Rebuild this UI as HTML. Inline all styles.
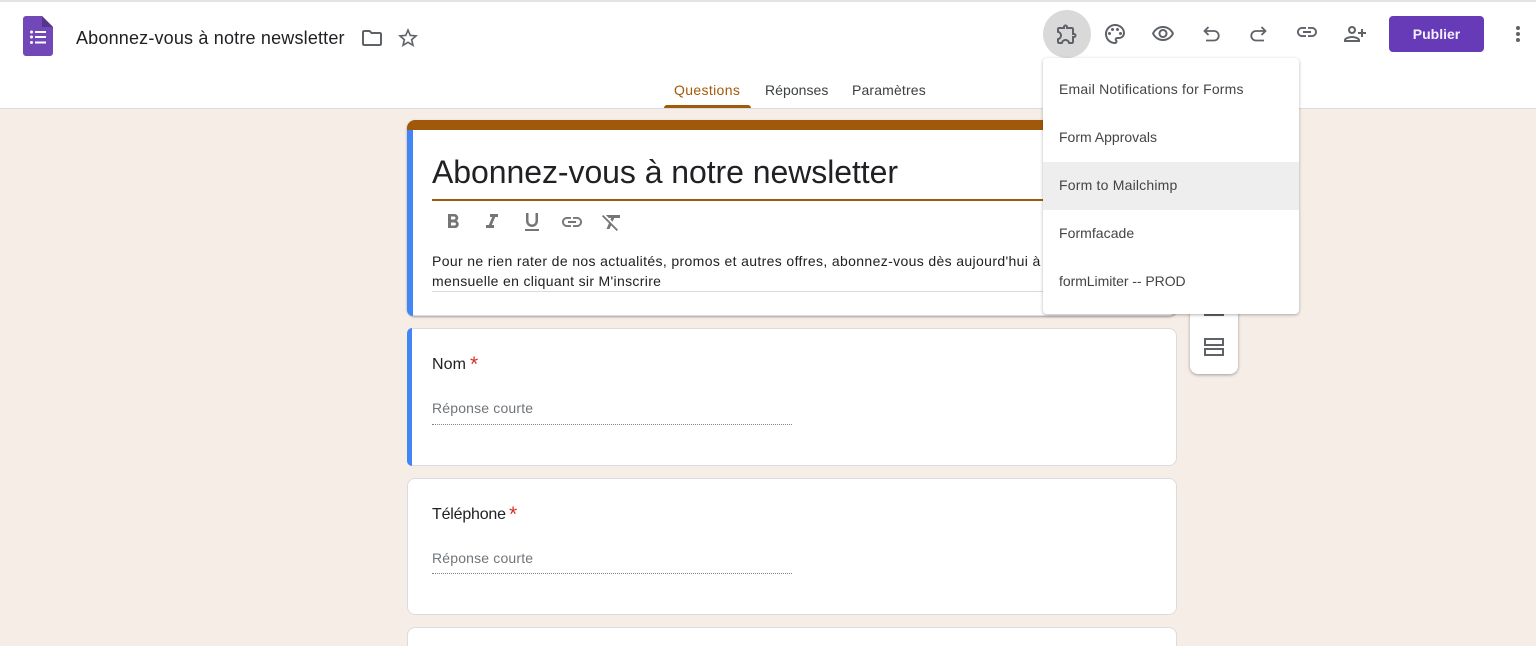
<!DOCTYPE html>
<html lang="fr"><head><meta charset="utf-8"><title>Abonnez-vous à notre newsletter</title>
<style>
html,body{margin:0;padding:0;width:1536px;height:646px;overflow:hidden}
body{background:#f6ede7;position:relative;font-family:"Liberation Sans",sans-serif}
#w{position:absolute;left:0;top:0;width:1536px;height:646px;overflow:hidden}
.a{position:absolute;white-space:nowrap}
svg.i{position:absolute;fill:#5f6368}
svg.g{position:absolute;fill:#757575}
.card{position:absolute;left:407px;width:768px;background:#fff;border:1px solid #dadce0;border-radius:8px}
.blue{position:absolute;left:-1px;top:-1px;bottom:-1px;width:5px;background:#4285f4;border-radius:8px 0 0 8px}
.m{position:absolute;left:0;width:256px;height:48px;line-height:48px;text-indent:16px;font-size:14px;color:#444;white-space:nowrap;letter-spacing:.2px}
.s{position:absolute;font-size:21px;line-height:20px;color:#d93025}
</style></head><body><div id="w">

<div class="a" style="left:0;top:0;width:1536px;height:108px;background:#fff;border-bottom:1px solid #dadce0"></div>
<div class="a" style="left:0;top:0;width:1536px;height:2px;background:#e3e3e3"></div>

<svg style="position:absolute;left:23px;top:16px" width="30" height="40" viewBox="0 0 30 40">
<path d="M3 0H19L30 11V37a3 3 0 0 1-3 3H3a3 3 0 0 1-3-3V3a3 3 0 0 1 3-3z" fill="#7248b9"/>
<path d="M19 0L30 11H19z" fill="#55368f"/>
<g fill="#fff"><circle cx="8.500" cy="16" r="1.500"/><circle cx="8.500" cy="21" r="1.500"/><circle cx="8.500" cy="26.500" r="1.500"/><rect x="12" y="15" width="11" height="2"/><rect x="12" y="20" width="11" height="2"/><rect x="12" y="25.500" width="11" height="2"/></g>
</svg>
<div class="a" style="left:76px;top:27px;font-size:18px;line-height:22px;color:#202124;letter-spacing:.18px">Abonnez-vous à notre newsletter</div>
<svg class="i" style="left:360px;top:26px" width="24" height="24" viewBox="0 0 24 24"><path d="M9.170 6l2 2H20v10H4V6h5.170M10 4H4c-1.100 0-1.990.9-1.990 2L2 18c0 1.100.9 2 2 2h16c1.100 0 2-.9 2-2V8c0-1.100-.9-2-2-2h-8l-2-2z"/></svg>
<svg class="i" style="left:396px;top:26px" width="24" height="24" viewBox="0 0 24 24"><path d="M22 9.240l-7.190-.62L12 2 9.190 8.630 2 9.240l5.460 4.730L5.820 21 12 17.270 18.180 21l-1.630-7.030L22 9.240zM12 15.400l-3.760 2.270 1-4.280-3.320-2.880 4.380-.38L12 6.100l1.710 4.040 4.380.38-3.320 2.880 1 4.280L12 15.400z"/></svg>

<div class="a" style="left:1043px;top:10px;width:48px;height:48px;border-radius:50%;background:#d9d9d9"></div>
<svg class="i" style="left:1055px;top:22px" width="24" height="24" viewBox="0 0 24 24"><path d="M10.500 4.500c.28 0 .5.22.5.5v2h6v6h2c.28 0 .5.22.5.5s-.22.5-.5.5h-2v6h-2.120c-.68-1.750-2.390-3-4.380-3s-3.700 1.250-4.380 3H4v-2.120c1.750-.68 3-2.390 3-4.380 0-1.990-1.240-3.700-2.990-4.380L4 7h6V5c0-.28.22-.5.5-.5zm0-2C9.120 2.500 8 3.620 8 5H4c-1.100 0-1.990.9-1.990 2v3.800h.29c1.490 0 2.700 1.210 2.700 2.700s-1.210 2.700-2.700 2.700H2V20c0 1.100.9 2 2 2h3.800v-.3c0-1.490 1.210-2.700 2.700-2.700s2.700 1.210 2.700 2.700v.3H17c1.100 0 2-.9 2-2v-4c1.380 0 2.500-1.120 2.500-2.500S20.380 11 19 11V7c0-1.100-.9-2-2-2h-4c0-1.380-1.120-2.500-2.500-2.500z"/></svg>
<svg class="i" style="left:1103px;top:22px" width="24" height="24" viewBox="0 0 24 24"><path d="M12 2C6.490 2 2 6.490 2 12s4.490 10 10 10c1.380 0 2.500-1.120 2.500-2.500 0-.61-.23-1.200-.64-1.670-.08-.1-.13-.21-.13-.33 0-.28.22-.5.5-.5H16c3.310 0 6-2.690 6-6 0-4.960-4.490-9-10-9zm4 13h-1.770c-1.380 0-2.500 1.120-2.500 2.500 0 .6.22 1.180.62 1.640.07.08.15.24.15.36 0 .28-.22.5-.5.5-4.410 0-8-3.590-8-8s3.590-8 8-8 8 3.140 8 7c0 2.210-1.790 4-4 4z"/><circle cx="6.500" cy="11.500" r="1.500"/><circle cx="9.500" cy="7.500" r="1.500"/><circle cx="14.500" cy="7.500" r="1.500"/><circle cx="17.500" cy="11.500" r="1.500"/></svg>
<svg class="i" style="left:1151px;top:22px" width="24" height="24" viewBox="0 0 24 24"><path d="M12 6c3.790 0 7.170 2.130 8.820 5.500C19.170 14.870 15.790 17 12 17s-7.170-2.130-8.820-5.500C4.830 8.130 8.210 6 12 6m0-2C7 4 2.730 7.110 1 11.500 2.730 15.890 7 19 12 19s9.270-3.110 11-7.500C21.270 7.110 17 4 12 4zm0 5c1.380 0 2.500 1.120 2.500 2.500S13.380 14 12 14s-2.500-1.120-2.500-2.500S10.620 9 12 9m0-2c-2.480 0-4.500 2.020-4.500 4.500S9.520 16 12 16s4.500-2.020 4.500-4.500S14.480 7 12 7z"/></svg>
<svg style="position:absolute;left:1199px;top:22px" width="24" height="24" viewBox="0 0 24 24" fill="none" stroke="#5f6368" stroke-width="1.800"><path d="M9.500 5L5.500 9l4 4M5.500 9H15a4.500 4.500 0 0 1 0 9.500H7"/></svg>
<svg style="position:absolute;left:1247px;top:22px" width="24" height="24" viewBox="0 0 24 24" fill="none" stroke="#5f6368" stroke-width="1.800"><path d="M14.500 5l4 4-4 4M18.500 9H9a4.500 4.500 0 0 0 0 9.500h8"/></svg>
<svg class="i" style="left:1295px;top:20px" width="24" height="24" viewBox="0 0 24 24"><path d="M3.900 12c0-1.710 1.390-3.100 3.100-3.100h4V7H7c-2.760 0-5 2.240-5 5s2.240 5 5 5h4v-1.900H7c-1.710 0-3.100-1.390-3.100-3.100zM8 13h8v-2H8v2zm9-6h-4v1.900h4c1.710 0 3.100 1.390 3.100 3.100s-1.390 3.100-3.100 3.100h-4V17h4c2.760 0 5-2.240 5-5s-2.240-5-5-5z"/></svg>
<svg class="i" style="left:1343px;top:22px;transform:scaleX(-1)" width="24" height="24" viewBox="0 0 24 24"><path d="M15 12c2.210 0 4-1.790 4-4s-1.790-4-4-4-4 1.790-4 4 1.790 4 4 4zm0-6c1.100 0 2 .9 2 2s-.9 2-2 2-2-.9-2-2 .9-2 2-2zm0 8c-2.670 0-8 1.340-8 4v2h16v-2c0-2.660-5.330-4-8-4zm-6 4c.22-.72 3.310-2 6-2 2.700 0 5.800 1.290 6 2H9zm-3-3v-3h3v-2H6V7H4v3H1v2h3v3h2z"/></svg>
<div class="a" style="left:1389px;top:16px;width:95px;height:36px;line-height:36px;border-radius:4px;background:#673ab7;color:#f3eefb;text-align:center;font-size:14px;font-weight:700">Publier</div>
<svg class="i" style="left:1506px;top:22px" width="24" height="24" viewBox="0 0 24 24"><circle cx="12" cy="6" r="2"/><circle cx="12" cy="12" r="2"/><circle cx="12" cy="18" r="2"/></svg>

<div class="a" style="left:674px;top:82px;font-size:14px;line-height:16px;color:#a25a0b;letter-spacing:.35px">Questions</div>
<div class="a" style="left:765px;top:82px;font-size:14px;line-height:16px;color:#3c4043;letter-spacing:.05px">Réponses</div>
<div class="a" style="left:852px;top:82px;font-size:14px;line-height:16px;color:#3c4043;letter-spacing:.15px">Paramètres</div>
<div class="a" style="left:664px;top:105px;width:87px;height:3px;background:#a0590a;border-radius:3px 3px 0 0"></div>

<div class="card" style="top:120px;height:195px;border-top:0;box-shadow:0 1px 2px rgba(0,0,0,.35)">
  <div class="a" style="left:-1px;top:0;width:770px;height:10px;background:#a0590a;border-radius:8px 8px 0 0"></div>
  <div class="a" style="left:-1px;top:10px;width:6px;height:186px;background:#4285f4;border-radius:0 0 0 8px"></div>
  <div class="a" style="left:24px;top:33px;font-size:32px;line-height:38px;color:#202124;letter-spacing:-.06px">Abonnez-vous à notre newsletter</div>
  <div class="a" style="left:24px;top:79px;width:720px;height:2px;background:#a0590a"></div>
  <svg class="g" style="left:33px;top:90px" width="24" height="24" viewBox="0 0 24 24"><path d="M15.600 10.790c.97-.67 1.650-1.770 1.650-2.790 0-2.260-1.750-4-4-4H7v14h7.040c2.090 0 3.710-1.700 3.710-3.790 0-1.520-.86-2.820-2.150-3.420zM10 6.500h3c.83 0 1.500.67 1.500 1.500s-.67 1.500-1.500 1.500h-3v-3zm3.500 9H10v-3h3.500c.83 0 1.500.67 1.500 1.500s-.67 1.500-1.500 1.500z"/></svg>
  <svg class="g" style="left:72px;top:90px" width="24" height="24" viewBox="0 0 24 24"><path d="M10 4v3h2.210l-3.420 8H6v3h8v-3h-2.210l3.420-8H18V4z"/></svg>
  <svg class="g" style="left:112px;top:90px" width="24" height="24" viewBox="0 0 24 24"><path d="M12 17c3.310 0 6-2.690 6-6V3h-2.500v8c0 1.930-1.570 3.500-3.500 3.500S8.500 12.930 8.500 11V3H6v8c0 3.310 2.690 6 6 6zm-7 2v2h14v-2H5z"/></svg>
  <svg class="g" style="left:152px;top:90px" width="24" height="24" viewBox="0 0 24 24"><path d="M3.900 12c0-1.710 1.390-3.100 3.100-3.100h4V7H7c-2.760 0-5 2.240-5 5s2.240 5 5 5h4v-1.900H7c-1.710 0-3.100-1.390-3.100-3.100zM8 13h8v-2H8v2zm9-6h-4v1.900h4c1.710 0 3.100 1.390 3.100 3.100s-1.390 3.100-3.100 3.100h-4V17h4c2.760 0 5-2.240 5-5s-2.240-5-5-5z"/></svg>
  <svg class="g" style="left:192px;top:90px" width="24" height="24" viewBox="0 0 24 24"><path d="M3.270 5L2 6.270l6.970 6.970L6.500 19h3l1.570-3.660L16.730 21 18 19.730 3.550 5.270 3.270 5zM6 5v.18L8.820 8h2.400l-.72 1.680 2.100 2.100L14.210 8H20V5H6z"/></svg>
  <div class="a" style="left:24px;top:131px;font-size:14px;line-height:20px;color:#202124;letter-spacing:.36px">Pour ne rien rater de nos actualités, promos et autres offres, abonnez-vous dès aujourd'hui à notre newsletter</div>
  <div class="a" style="left:24px;top:151px;font-size:14px;line-height:20px;color:#202124;letter-spacing:.33px">mensuelle en cliquant sir M'inscrire</div>
  <div class="a" style="left:24px;top:171px;width:720px;height:1px;background:#dadce0"></div>
</div>

<div class="card" style="top:328px;height:136px"><div class="blue"></div>
  <div class="a" style="left:24px;top:26px;font-size:16px;line-height:20px;color:#202124;letter-spacing:.1px">Nom</div>
  <div class="s" style="left:62px;top:26px">*</div>
  <div class="a" style="left:24px;top:71px;font-size:14px;line-height:16px;color:#70757a;letter-spacing:.17px">Réponse courte</div>
  <div class="a" style="left:24px;top:95px;width:360px;border-top:1px dotted #80868b"></div>
</div>

<div class="card" style="top:478px;height:135px">
  <div class="a" style="left:24px;top:26px;font-size:16px;line-height:20px;color:#202124;letter-spacing:-.2px">Téléphone</div>
  <div class="s" style="left:101px;top:26px">*</div>
  <div class="a" style="left:24px;top:71px;font-size:14px;line-height:16px;color:#70757a;letter-spacing:.17px">Réponse courte</div>
  <div class="a" style="left:24px;top:94px;width:360px;border-top:1px dotted #80868b"></div>
</div>

<div class="card" style="top:627px;height:40px"></div>

<div class="a" style="left:1190px;top:290px;width:48px;height:84px;background:#fff;border-radius:0 0 8px 8px;box-shadow:0 1px 3px rgba(0,0,0,.35)"></div>
<div class="a" style="left:1204px;top:314px;width:20px;height:2px;background:#5f6368"></div>
<svg style="position:absolute;left:1204px;top:338px" width="20" height="18" viewBox="0 0 20 18" fill="none" stroke="#5f6368" stroke-width="2"><rect x="1" y="1" width="18" height="6"/><rect x="1" y="11" width="18" height="6"/></svg>

<div class="a" style="left:1043px;top:58px;width:256px;height:256px;background:#fff;border-radius:4px;box-shadow:0 1px 3px rgba(0,0,0,.3)">
  <div class="m" style="top:7px">Email Notifications for Forms</div>
  <div class="m" style="top:55px;letter-spacing:0">Form Approvals</div>
  <div class="m" style="top:104px;line-height:46px;background:#eee">Form to Mailchimp</div>
  <div class="m" style="top:151px;letter-spacing:.05px">Formfacade</div>
  <div class="m" style="top:199px;letter-spacing:-.05px">formLimiter -- PROD</div>
</div>
</div></body></html>
